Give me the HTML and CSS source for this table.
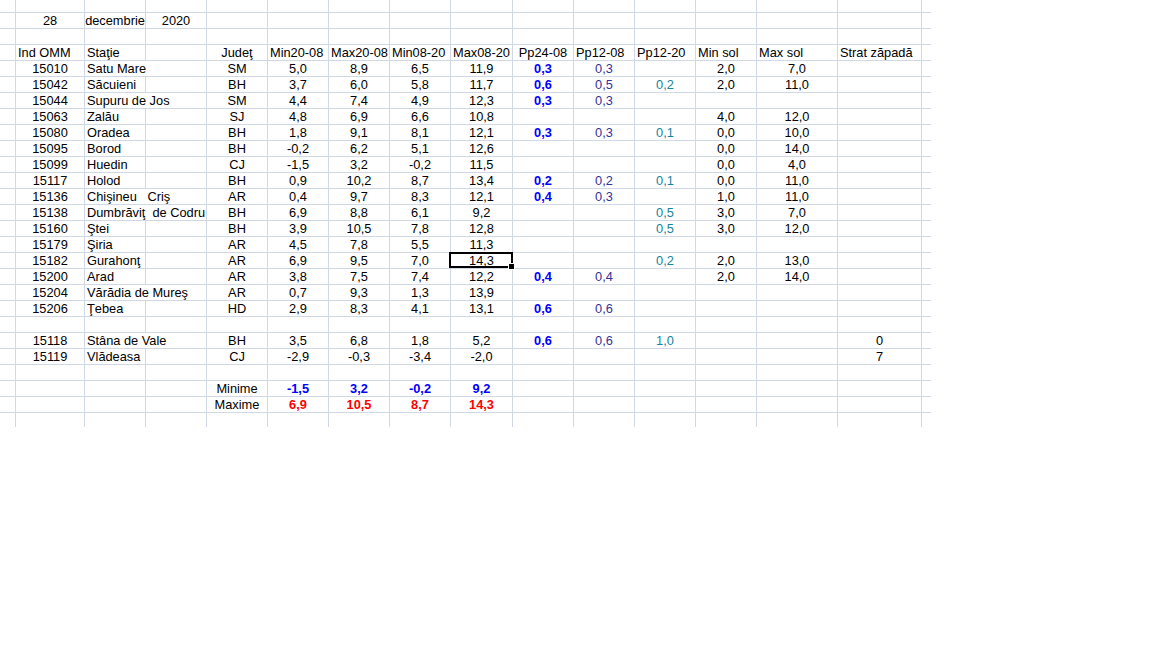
FILE: index.html
```html
<!DOCTYPE html>
<html lang="ro">
<head>
<meta charset="utf-8">
<title>Temperaturi 28 decembrie 2020</title>
<link rel="stylesheet" href="styles.css">
</head>
<body>
<div class="sheet">
  <div class="row top"><span></span><span></span><span></span><span></span><span></span><span></span><span></span><span></span><span></span><span></span><span></span><span></span><span></span><span></span><span></span><span></span></div>
  <div class="row"><span></span><span class="c">28</span><span class="c">decembrie</span><span class="c">2020</span><span></span><span></span><span></span><span></span><span></span><span></span><span></span><span></span><span></span><span></span><span></span><span></span></div>
  <div class="row"><span></span><span></span><span></span><span></span><span></span><span></span><span></span><span></span><span></span><span></span><span></span><span></span><span></span><span></span><span></span><span></span></div>
  <div class="row"><span></span><span class="l">Ind OMM</span><span class="l">Staţie</span><span></span><span class="c">Judeţ</span><span class="l">Min20-08</span><span class="l">Max20-08</span><span class="l">Min08-20</span><span class="l">Max08-20</span><span class="c">Pp24-08</span><span class="l">Pp12-08</span><span class="l">Pp12-20</span><span class="l">Min sol</span><span class="l">Max sol</span><span class="l">Strat zăpadă</span><span></span></div>

  <div class="row"><span></span><span class="c">15010</span><span class="l w2">Satu Mare</span><span class="c">SM</span><span class="c">5,0</span><span class="c">8,9</span><span class="c">6,5</span><span class="c">11,9</span><span class="c pb">0,3</span><span class="c pi">0,3</span><span></span><span class="c">2,0</span><span class="c">7,0</span><span></span><span></span></div>
  <div class="row"><span></span><span class="c">15042</span><span class="l">Săcuieni</span><span></span><span class="c">BH</span><span class="c">3,7</span><span class="c">6,0</span><span class="c">5,8</span><span class="c">11,7</span><span class="c pb">0,6</span><span class="c pi">0,5</span><span class="c pt">0,2</span><span class="c">2,0</span><span class="c">11,0</span><span></span><span></span></div>
  <div class="row"><span></span><span class="c">15044</span><span class="l w2">Supuru de Jos</span><span class="c">SM</span><span class="c">4,4</span><span class="c">7,4</span><span class="c">4,9</span><span class="c">12,3</span><span class="c pb">0,3</span><span class="c pi">0,3</span><span></span><span></span><span></span><span></span><span></span></div>
  <div class="row"><span></span><span class="c">15063</span><span class="l">Zalău</span><span></span><span class="c">SJ</span><span class="c">4,8</span><span class="c">6,9</span><span class="c">6,6</span><span class="c">10,8</span><span></span><span></span><span></span><span class="c">4,0</span><span class="c">12,0</span><span></span><span></span></div>
  <div class="row"><span></span><span class="c">15080</span><span class="l">Oradea</span><span></span><span class="c">BH</span><span class="c">1,8</span><span class="c">9,1</span><span class="c">8,1</span><span class="c">12,1</span><span class="c pb">0,3</span><span class="c pi">0,3</span><span class="c pt">0,1</span><span class="c">0,0</span><span class="c">10,0</span><span></span><span></span></div>
  <div class="row"><span></span><span class="c">15095</span><span class="l">Borod</span><span></span><span class="c">BH</span><span class="c">-0,2</span><span class="c">6,2</span><span class="c">5,1</span><span class="c">12,6</span><span></span><span></span><span></span><span class="c">0,0</span><span class="c">14,0</span><span></span><span></span></div>
  <div class="row"><span></span><span class="c">15099</span><span class="l">Huedin</span><span></span><span class="c">CJ</span><span class="c">-1,5</span><span class="c">3,2</span><span class="c">-0,2</span><span class="c">11,5</span><span></span><span></span><span></span><span class="c">0,0</span><span class="c">4,0</span><span></span><span></span></div>
  <div class="row"><span></span><span class="c">15117</span><span class="l">Holod</span><span></span><span class="c">BH</span><span class="c">0,9</span><span class="c">10,2</span><span class="c">8,7</span><span class="c">13,4</span><span class="c pb">0,2</span><span class="c pi">0,2</span><span class="c pt">0,1</span><span class="c">0,0</span><span class="c">11,0</span><span></span><span></span></div>
  <div class="row"><span></span><span class="c">15136</span><span class="l w2">Chişineu   Criş</span><span class="c">AR</span><span class="c">0,4</span><span class="c">9,7</span><span class="c">8,3</span><span class="c">12,1</span><span class="c pb">0,4</span><span class="c pi">0,3</span><span></span><span class="c">1,0</span><span class="c">11,0</span><span></span><span></span></div>
  <div class="row"><span></span><span class="c">15138</span><span class="l w2">Dumbrăviţ  de Codru</span><span class="c">BH</span><span class="c">6,9</span><span class="c">8,8</span><span class="c">6,1</span><span class="c">9,2</span><span></span><span></span><span class="c pt">0,5</span><span class="c">3,0</span><span class="c">7,0</span><span></span><span></span></div>
  <div class="row"><span></span><span class="c">15160</span><span class="l">Ştei</span><span></span><span class="c">BH</span><span class="c">3,9</span><span class="c">10,5</span><span class="c">7,8</span><span class="c">12,8</span><span></span><span></span><span class="c pt">0,5</span><span class="c">3,0</span><span class="c">12,0</span><span></span><span></span></div>
  <div class="row"><span></span><span class="c">15179</span><span class="l">Şiria</span><span></span><span class="c">AR</span><span class="c">4,5</span><span class="c">7,8</span><span class="c">5,5</span><span class="c">11,3</span><span></span><span></span><span></span><span></span><span></span><span></span><span></span></div>
  <div class="row"><span></span><span class="c">15182</span><span class="l">Gurahonţ</span><span></span><span class="c">AR</span><span class="c">6,9</span><span class="c">9,5</span><span class="c">7,0</span><span class="c">14,3</span><span></span><span></span><span class="c pt">0,2</span><span class="c">2,0</span><span class="c">13,0</span><span></span><span></span></div>
  <div class="row"><span></span><span class="c">15200</span><span class="l">Arad</span><span></span><span class="c">AR</span><span class="c">3,8</span><span class="c">7,5</span><span class="c">7,4</span><span class="c">12,2</span><span class="c pb">0,4</span><span class="c pi">0,4</span><span></span><span class="c">2,0</span><span class="c">14,0</span><span></span><span></span></div>
  <div class="row"><span></span><span class="c">15204</span><span class="l w2">Vărădia de Mureş</span><span class="c">AR</span><span class="c">0,7</span><span class="c">9,3</span><span class="c">1,3</span><span class="c">13,9</span><span></span><span></span><span></span><span></span><span></span><span></span><span></span></div>
  <div class="row"><span></span><span class="c">15206</span><span class="l">Ţebea</span><span></span><span class="c">HD</span><span class="c">2,9</span><span class="c">8,3</span><span class="c">4,1</span><span class="c">13,1</span><span class="c pb">0,6</span><span class="c pi">0,6</span><span></span><span></span><span></span><span></span><span></span></div>
  <div class="row"><span></span><span></span><span></span><span></span><span></span><span></span><span></span><span></span><span></span><span></span><span></span><span></span><span></span><span></span><span></span><span></span></div>
  <div class="row"><span></span><span class="c">15118</span><span class="l w2">Stâna de Vale</span><span class="c">BH</span><span class="c">3,5</span><span class="c">6,8</span><span class="c">1,8</span><span class="c">5,2</span><span class="c pb">0,6</span><span class="c pi">0,6</span><span class="c pt">1,0</span><span></span><span></span><span class="c">0</span><span></span></div>
  <div class="row"><span></span><span class="c">15119</span><span class="l">Vlădeasa</span><span></span><span class="c">CJ</span><span class="c">-2,9</span><span class="c">-0,3</span><span class="c">-3,4</span><span class="c">-2,0</span><span></span><span></span><span></span><span></span><span></span><span class="c">7</span><span></span></div>
  <div class="row"><span></span><span></span><span></span><span></span><span></span><span></span><span></span><span></span><span></span><span></span><span></span><span></span><span></span><span></span><span></span><span></span></div>
  <div class="row"><span></span><span></span><span></span><span></span><span class="c">Minime</span><span class="c mn">-1,5</span><span class="c mn">3,2</span><span class="c mn">-0,2</span><span class="c mn">9,2</span><span></span><span></span><span></span><span></span><span></span><span></span><span></span></div>
  <div class="row"><span></span><span></span><span></span><span></span><span class="c">Maxime</span><span class="c mx">6,9</span><span class="c mx">10,5</span><span class="c mx">8,7</span><span class="c mx">14,3</span><span></span><span></span><span></span><span></span><span></span><span></span><span></span></div>
  <div class="row last"><span></span><span></span><span></span><span></span><span></span><span></span><span></span><span></span><span></span><span></span><span></span><span></span><span></span><span></span><span></span><span></span></div>

  <div class="selection"><i class="handle"></i></div>
</div>
</body>
</html>
```

FILE: styles.css
```css
html, body {
  margin: 0;
  padding: 0;
  background: #ffffff;
}

body {
  font-family: "Liberation Sans", Arial, sans-serif;
  font-size: 12.8px;
  color: #000000;
}

.sheet {
  position: relative;
  width: 931px;
}

.row {
  display: grid;
  grid-template-columns: 15px 69px 61px 61px 61px 61px 61px 61px 62px 61px 61px 61px 61px 81px 84px 10px;
  height: 16px;
  box-sizing: border-box;
  border-bottom: 1px solid #d0d7e5;
}

.row.top {
  height: 13px;
}

.row.last {
  height: 14px;
  border-bottom: none;
}

.row > span {
  display: block;
  box-sizing: border-box;
  border-left: 1px solid #d0d7e5;
  padding-top: 1px;
  line-height: 13px;
  white-space: pre;
  overflow: visible;
  min-width: 0;
}

.row > span:first-child {
  border-left: none;
}

.row.top > span {
  padding-top: 0;
}

.c {
  text-align: center;
}

.l {
  text-align: left;
  padding-left: 2px;
}

.w2 {
  grid-column: span 2;
}

.pb {
  color: #0000ff;
  font-weight: bold;
}

.pi {
  color: #333399;
}

.pt {
  color: #16849c;
}

.mn {
  color: #0000ff;
  font-weight: bold;
}

.mx {
  color: #ff0000;
  font-weight: bold;
}

.selection {
  position: absolute;
  left: 449px;
  top: 252px;
  width: 64px;
  height: 16px;
  box-sizing: border-box;
  border: 2px solid #000000;
}

.handle {
  position: absolute;
  right: -4px;
  bottom: -4px;
  width: 5px;
  height: 5px;
  background: #000000;
  border: 1px solid #ffffff;
}
```
